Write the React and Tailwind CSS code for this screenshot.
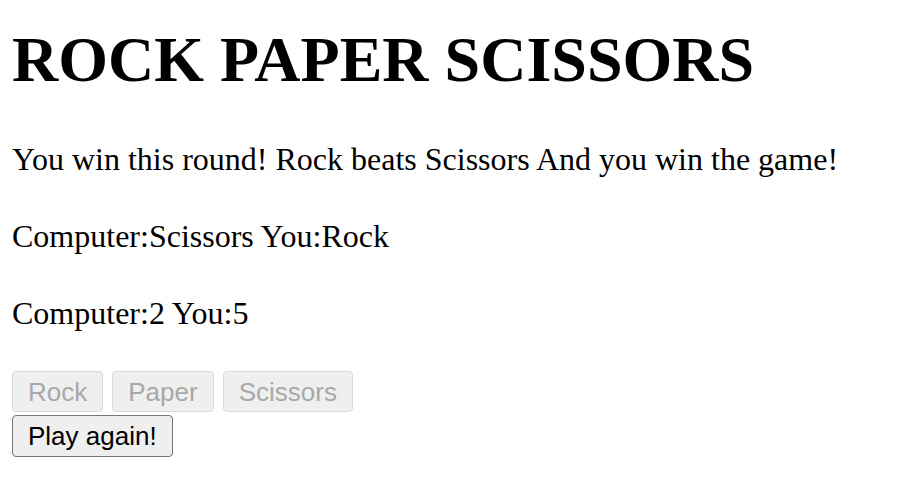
export default function App() {
  return (
    <div className="min-h-screen bg-white px-[12px] text-black">
      <h1 className="pt-[23px] text-[64px] font-bold leading-[74px] font-['Liberation_Serif',serif] whitespace-nowrap">
        ROCK PAPER SCISSORS
      </h1>
      <div className="font-['Liberation_Serif',serif] text-[32px] leading-[37px] whitespace-nowrap">
        <p className="mt-[44px]">You win this round! Rock beats Scissors And you win the game!</p>
        <p className="mt-[40px]">Computer:Scissors You:Rock</p>
        <p className="mt-[40px]">Computer:2 You:5</p>
      </div>
      <div className="mt-[39px] flex flex-col items-start gap-[3px] font-['Liberation_Sans',sans-serif] text-[26px]">
        <div className="flex gap-[9px]">
          <button disabled className="h-[41px] rounded-[4px] border-[1.5px] border-[#d9d9d9] bg-[#efefef] px-[15px] leading-none text-[#a8a8a8]">Rock</button>
          <button disabled className="h-[41px] rounded-[4px] border-[1.5px] border-[#d9d9d9] bg-[#efefef] px-[15px] leading-none text-[#a8a8a8]">Paper</button>
          <button disabled className="h-[41px] rounded-[4px] border-[1.5px] border-[#d9d9d9] bg-[#efefef] px-[15px] leading-none text-[#a8a8a8]">Scissors</button>
        </div>
        <button className="h-[42px] rounded-[4px] border-[1.5px] border-[#767676] bg-[#efefef] px-[15px] leading-none text-black">Play again!</button>
      </div>
    </div>
  );
}
